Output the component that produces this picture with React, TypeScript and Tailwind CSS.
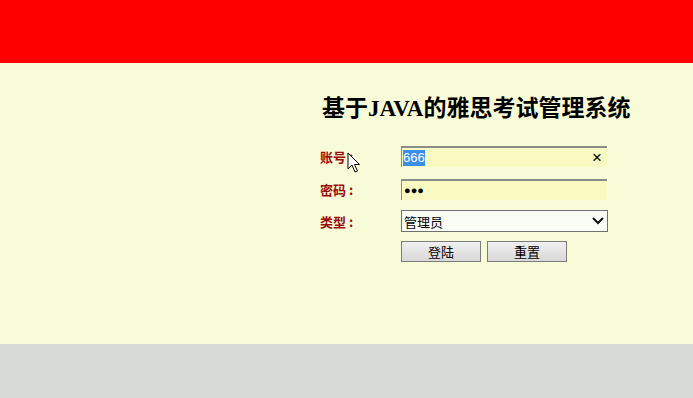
import React from "react";

const cjk = '"Noto Sans CJK SC", "Liberation Sans", sans-serif';

function Label({ text }: { text: string }) {
  return (
    <div
      className="w-[81px] shrink-0 text-[13px] font-bold leading-none text-[#9a0a0a]"
      style={{ fontFamily: cjk }}
    >
      {text}
      <span className="ml-[3px]">:</span>
    </div>
  );
}

export default function App() {
  return (
    <div className="flex h-[398px] w-[693px] flex-col overflow-hidden" style={{ fontFamily: '"Liberation Sans", "Noto Sans CJK SC", sans-serif' }}>
      <div className="h-[63px] shrink-0 bg-[#ff0000]" />
      <div className="relative flex h-[281px] shrink-0 flex-col bg-[#f8fbd8] pl-[320px] pt-[31px]">
        <h1
          className="ml-[2px] text-[23px] font-bold leading-[30px] text-black"
          style={{ fontFamily: '"Liberation Serif", "Noto Sans CJK SC", serif' }}
        >
          基于JAVA的雅思考试管理系统
        </h1>
        <div className="mt-[22px] flex flex-col">
          <div className="flex h-[21px] items-center">
            <Label text="账号" />
            <div className="flex h-[21px] w-[206px] items-center border-l border-t-2 border-[#8c8c8c] bg-[#f9f9c2] pl-[1px] pr-[5px]">
              <span className="bg-[#3b8eea] text-[13px] leading-[16px] text-white">666</span>
              <span className="ml-auto text-[17px] leading-none text-black">×</span>
            </div>
          </div>
          <div className="mt-[12px] flex h-[21px] items-center">
            <Label text="密码" />
            <div className="flex h-[21px] w-[206px] items-center border-l border-t-2 border-[#8c8c8c] bg-[#f9f9c2] pl-[2px]">
              <span className="text-[11px] leading-none tracking-[0px] text-black">●●●</span>
            </div>
          </div>
          <div className="mt-[10px] flex h-[22px] items-center">
            <Label text="类型" />
            <div className="flex h-[22px] w-[207px] items-center border border-[#707070] bg-[#fafcf6] pl-[2px] pr-[2px]">
              <span className="text-[13px] leading-none text-black" style={{ fontFamily: cjk }}>管理员</span>
              <svg className="ml-auto" width="14" height="10" viewBox="0 0 14 10">
                <path d="M2 2 L7 7 L12 2" fill="none" stroke="#111" strokeWidth="2" />
              </svg>
            </div>
          </div>
          <div className="mt-[9px] flex h-[21px] items-center">
            <div className="w-[81px] shrink-0" />
            <button className="h-[21px] w-[80px] border border-[#7c7c7c] bg-gradient-to-b from-[#f0f0f0] to-[#d9d9d9] text-[13px] leading-none text-black" style={{ fontFamily: cjk }}>
              登陆
            </button>
            <button className="ml-[6px] h-[21px] w-[80px] border border-[#7c7c7c] bg-gradient-to-b from-[#f0f0f0] to-[#d9d9d9] text-[13px] leading-none text-black" style={{ fontFamily: cjk }}>
              重置
            </button>
          </div>
        </div>
        <svg className="absolute left-[347px] top-[89px]" width="14" height="22" viewBox="0 0 14 22">
          <path d="M1 1 L1 17 L5 13 L8 20 L10.5 19 L7.5 12.5 L12.5 12.5 Z" fill="#fff" stroke="#000" strokeWidth="1" strokeLinejoin="miter" />
        </svg>
      </div>
      <div className="flex-1 bg-[#d6dbd6]" />
    </div>
  );
}
